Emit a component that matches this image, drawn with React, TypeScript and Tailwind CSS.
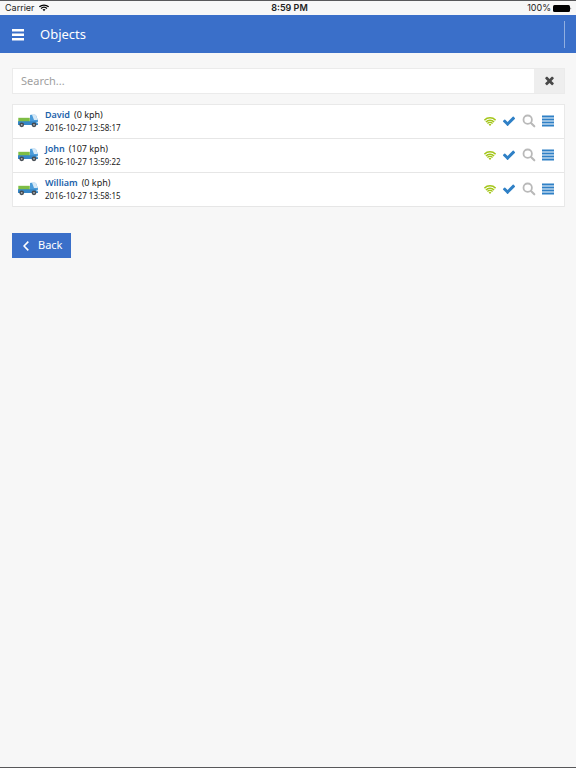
import { useState } from "react";

type Vehicle = { name: string; speed: string; time: string };

const vehicles: Vehicle[] = [
  { name: "David", speed: "(0 kph)", time: "2016-10-27 13:58:17" },
  { name: "John", speed: "(107 kph)", time: "2016-10-27 13:59:22" },
  { name: "William", speed: "(0 kph)", time: "2016-10-27 13:58:15" },
];

function SignalIcon({ className }: { className: string }) {
  return (
    <svg viewBox="0 0 12 9" className={className} fill="none" stroke="currentColor" aria-hidden="true">
      <path d="M.5 3.1C3.6.2 8.4.2 11.5 3.1" strokeWidth="1.5" />
      <path d="M2.4 5.1c2.1-1.9 5.1-1.9 7.2 0" strokeWidth="1.5" />
      <path d="M4.2 6.4C5.2 5.5 6.8 5.5 7.8 6.4L6 8.4z" fill="currentColor" stroke="none" />
    </svg>
  );
}

function RangeIcon() {
  return (
    <svg viewBox="0 0 12 9" className="h-[9px] w-3" fill="none" stroke="currentColor" aria-hidden="true">
      <path d="M.4 3.2C3.4 0 8.6 0 11.6 3.2" strokeWidth="1.5" />
      <path d="M1.9 5c2.3-2.4 5.9-2.4 8.2 0" strokeWidth="1.4" />
      <path d="M3.4 6.6c1.5-1.6 3.7-1.6 5.2 0" strokeWidth="1.4" />
      <path d="M4.6 7.4c.8-.8 2-.8 2.8 0L6 8.9z" fill="currentColor" stroke="none" />
    </svg>
  );
}

function CheckIcon() {
  return (
    <svg viewBox="0 0 1792 1792" className="size-[14px]" fill="currentColor" aria-hidden="true">
      <path d="M1671 566q0 40-28 68l-724 724-136 136q-28 28-68 28t-68-28l-136-136-362-362q-28-28-28-68t28-68l136-136q28-28 68-28t68 28l294 295 656-657q28-28 68-28t68 28l136 136q28 28 28 68z" />
    </svg>
  );
}

function SearchIcon() {
  return (
    <svg viewBox="0 0 14 14" className="size-[14px]" fill="none" stroke="currentColor" aria-hidden="true">
      <circle cx="5.7" cy="5.7" r="4.2" strokeWidth="1.8" />
      <path d="m9 9 3.3 3.3" strokeWidth="2.1" strokeLinecap="round" />
    </svg>
  );
}

function CrossIcon() {
  return (
    <svg viewBox="0 0 1792 1792" className="size-[13px]" fill="currentColor" aria-hidden="true">
      <path d="M1490 1322q0 40-28 68l-136 136q-28 28-68 28t-68-28l-294-294-294 294q-28 28-68 28t-68-28l-136-136q-28-28-28-68t28-68l294-294-294-294q-28-28-28-68t28-68l136-136q28-28 68-28t68 28l294 294 294-294q28-28 68-28t68 28l136 136q28 28 28 68t-28 68l-294 294 294 294q28 28 28 68z" />
    </svg>
  );
}

function ListIcon() {
  return (
    <svg viewBox="0 0 12 12" className="size-3" fill="currentColor" aria-hidden="true">
      <path d="M0 .5h12v2H0zM0 3.5h12v2H0zM0 6.5h12v2H0zM0 9.5h12v2H0z" />
    </svg>
  );
}

function TruckIcon() {
  return (
    <svg viewBox="0 0 20 14" className="h-[14px] w-5 shrink-0" aria-hidden="true">
      <path d="M12 1.5Q12 .7 12.8.7H17q.8 0 1.1.8L20 6.5V11h-8z" fill="#4a9bd9" />
      <path d="M14 .7h3q.8 0 1.1.8l1.6 4.5H16z" fill="#d5e8f6" />
      <path d="M.3 3.8h11.5V8H.3z" fill="#7ebd45" />
      <path d="M0 7.2h20v3.3q0 .5-.5.5H.5Q0 11 0 10.5z" fill="#3587c9" />
      <path d="M18.5 7.8H20v1.5h-1.5z" fill="#c9e1f3" />
      <circle cx="3.7" cy="10.8" r="2.4" fill="#444b52" />
      <circle cx="16" cy="10.8" r="2.4" fill="#444b52" />
      <circle cx="3.7" cy="10.8" r=".9" fill="#b4babf" />
      <circle cx="16" cy="10.8" r=".9" fill="#b4babf" />
    </svg>
  );
}

function VehicleRow({ vehicle }: { vehicle: Vehicle }) {
  return (
    <li className="flex h-[34px] items-center border-b border-[#e6e6e6] pr-[10px] pb-px pl-[5px]">
      <TruckIcon />
      <div className="ml-[7px] flex-1">
        <p className="text-[9px] leading-[14px]">
          <a href="#" className="mr-1 font-semibold text-[#1b62aa]">{vehicle.name}</a>
          {vehicle.speed}
        </p>
        <p className="text-[8px] leading-3">{vehicle.time}</p>
      </div>
      <div className="flex items-center gap-[6px] text-[#2f80c6]">
        <button type="button" aria-label="Signal" className="text-[#a4c61a]"><RangeIcon /></button>
        <button type="button" aria-label="Status"><CheckIcon /></button>
        <button type="button" aria-label="Locate" className="text-[#b9b9b9]"><SearchIcon /></button>
        <button type="button" aria-label="Details"><ListIcon /></button>
      </div>
    </li>
  );
}

export default function App() {
  const [query, setQuery] = useState("");
  const shown = vehicles.filter((v) => v.name.toLowerCase().includes(query.toLowerCase()));

  return (
    <div className="flex min-h-screen flex-col border-y border-[#58585a] bg-[#f7f7f7] font-['Noto_Sans',sans-serif] text-[#222]">
      <div className="grid h-[14px] grid-cols-3 items-center pr-1 pl-[5px] font-['Inter',sans-serif] text-[9px] leading-[14px] text-[#222]">
        <div className="flex items-center gap-1">
          Carrier
          <SignalIcon className="h-2 w-[10px] text-black" />
        </div>
        <div className="pl-[2px] text-center font-semibold">8:59 PM</div>
        <div className="flex items-center justify-end gap-[2px]">
          100%
          <svg viewBox="0 0 19 7" className="h-[7px] w-[19px]" aria-hidden="true">
            <rect width="17" height="7" rx="1.5" />
            <path d="M17.6 2.3q1.2 1.2 0 2.4z" />
          </svg>
        </div>
      </div>

      <header className="flex h-[38px] items-center bg-[#3a6fc9] pr-[11px] pl-3 text-white">
        <button type="button" aria-label="Menu" className="pt-[2px]">
          <svg viewBox="0 0 12 12" className="size-3" fill="currentColor" aria-hidden="true">
            <path d="M0 0h12v2.500H0zM0 4.500h12V7H0zM0 9h12v2.500H0z" />
          </svg>
        </button>
        <h1 className="ml-4 flex-1 text-[13px] leading-5">Objects</h1>
        <div className="h-[27px] w-px bg-[#91afe0]" />
      </header>

      <main className="pt-[15px] pr-[11px] pl-3">
        <div className="flex h-[26px] border border-[#ebebeb] bg-white">
          <input
            type="text"
            aria-label="Search objects"
            placeholder="Search..."
            value={query}
            onChange={(e) => setQuery(e.target.value)}
            className="min-w-0 flex-1 px-2 text-[11px] outline-none placeholder:text-[#a0a0a0]"
          />
          <button
            type="button"
            aria-label="Clear search"
            onClick={() => setQuery("")}
            className="flex w-[30px] items-center justify-center bg-[#eeeeee] pb-px text-[#484848]"
          >
            <CrossIcon />
          </button>
        </div>

        <ul className="mt-[10px] border border-b-0 border-[#e9e9e9] bg-white">
          {shown.map((v) => (
            <VehicleRow key={v.name} vehicle={v} />
          ))}
        </ul>

        <button
          type="button"
          className="mt-[26px] flex h-[25px] items-center bg-[#3a6fc9] pr-[9px] pl-[11px] text-[11px] text-white"
        >
          <svg viewBox="0 0 6 10" className="mr-[9px] h-[10px] w-[6px]" fill="none" stroke="currentColor" strokeWidth="1.6" aria-hidden="true">
            <path d="M5.3.6 1 5l4.3 4.4" />
          </svg>
          Back
        </button>
      </main>
    </div>
  );
}
